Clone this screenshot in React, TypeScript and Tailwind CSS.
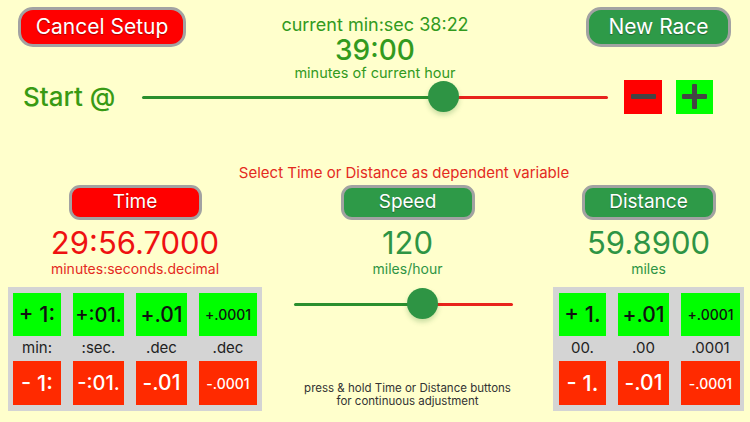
import React from "react";

function PillButton({
  label,
  color,
  width,
  height,
  size,
  radius,
}: {
  label: string;
  color: "red" | "green";
  width: string;
  height: string;
  size: string;
  radius: string;
}) {
  const bg = color === "red" ? "bg-[#FF0000]" : "bg-[#2E9A48]";
  return (
    <div
      className={`${width} ${height} ${radius} ${bg} border-[3px] border-[#A2A2A2] flex items-center justify-center text-white ${size} [text-shadow:0_1px_1px_rgba(0,0,0,0.35)]`}
    >
      {label}
    </div>
  );
}

function Slider({ width, thumb }: { width: number; thumb: number }) {
  return (
    <div className="relative h-[34px]" style={{ width }}>
      <div
        className="absolute top-[16px] left-0 h-[3px] bg-[#2A8F2E] rounded-full"
        style={{ width: thumb }}
      />
      <div
        className="absolute top-[16px] right-0 h-[3px] bg-[#E8231B] rounded-full"
        style={{ width: width - thumb }}
      />
      <div
        className="absolute top-[1px] w-[31px] h-[31px] rounded-full bg-[#2E9444] shadow-[0_3px_5px_rgba(40,120,40,0.25)]"
        style={{ left: thumb - 15.5 }}
      />
    </div>
  );
}

type Cell = { w: string; plus: string; minus: string; label: string; size: string };

function Keypad({ cells, width, pl }: { cells: Cell[]; width: string; pl: string }) {
  return (
    <div className={`${width} h-[124px] bg-[#D4D4D4] ${pl} pt-[6px] flex gap-[12px]`}>
      {cells.map((c, i) => (
        <div key={i} className={`${c.w} flex flex-col`}>
          <div
            className={`h-[43px] bg-[#00FF00] flex items-center justify-center text-[#111111] font-medium ${c.size}`}
          >
            {c.plus}
          </div>
          <div className="h-[25px] flex items-center justify-center text-[15px] text-[#222222]">
            {c.label}
          </div>
          <div
            className={`h-[44px] bg-[#FF2A00] flex items-center justify-center text-white font-medium ${c.size}`}
          >
            {c.minus}
          </div>
        </div>
      ))}
    </div>
  );
}

export default function App() {
  const leftCells: Cell[] = [
    { w: "w-[48px]", plus: "+ 1:", minus: "- 1:", label: "min:", size: "text-[22px]" },
    { w: "w-[51px]", plus: "+:01.", minus: "-:01.", label: ":sec.", size: "text-[20px]" },
    { w: "w-[51px]", plus: "+.01", minus: "-.01", label: ".dec", size: "text-[21px]" },
    { w: "w-[58px]", plus: "+.0001", minus: "-.0001", label: ".dec", size: "text-[14px]" },
  ];
  const rightCells: Cell[] = [
    { w: "w-[47px]", plus: "+ 1.", minus: "- 1.", label: "00.", size: "text-[22px]" },
    { w: "w-[51px]", plus: "+.01", minus: "-.01", label: ".00", size: "text-[21px]" },
    { w: "w-[59px]", plus: "+.0001", minus: "-.0001", label: ".0001", size: "text-[14px]" },
  ];

  return (
    <div
      className="w-[750px] h-[422px] bg-[#FFFFCC] overflow-hidden"
      style={{ fontFamily: "Inter, 'Liberation Sans', sans-serif" }}
    >
      {/* top row */}
      <div className="grid grid-cols-[1fr_auto_1fr] items-start h-[79px]">
        <div className="pl-[18px] pt-[7px]">
          <PillButton
            label="Cancel Setup"
            color="red"
            width="w-[168px]"
            height="h-[40px]"
            size="text-[21px]"
            radius="rounded-[15px]"
          />
        </div>
        <div className="flex flex-col items-center pt-[15px] text-[#329A1E]">
          <div className="text-[18px] leading-[20px]">current min:sec 38:22</div>
          <div className="text-[28px] leading-[30px] font-medium">39:00</div>
          <div className="text-[14.5px] leading-[15px]">minutes of current hour</div>
        </div>
        <div className="flex justify-end pr-[19px] pt-[7px]">
          <PillButton
            label="New Race"
            color="green"
            width="w-[145px]"
            height="h-[40px]"
            size="text-[21px]"
            radius="rounded-[15px]"
          />
        </div>
      </div>

      {/* start row */}
      <div className="flex items-center h-[35px]">
        <div className="pl-[23px] w-[142px] text-[26px] font-medium text-[#389A14]">Start @</div>
        <Slider width={466} thumb={301} />
        <div className="ml-[16px] w-[38px] h-[34px] bg-[#FF0000] flex items-center justify-center">
          <div className="w-[25px] h-[5px] bg-[#444444] rounded-[1px]" />
        </div>
        <div className="ml-[14px] w-[37px] h-[34px] bg-[#00FF00] flex items-center justify-center relative">
          <div className="w-[25px] h-[5px] bg-[#444444] rounded-[1px]" />
          <div className="absolute w-[5px] h-[25px] bg-[#444444] rounded-[1px]" />
        </div>
      </div>

      {/* select text */}
      <div className="mt-[49px] h-[20px] leading-[20px] text-center text-[15px] text-[#E42A1E] pl-[58px]">
        Select Time or Distance as dependent variable
      </div>

      {/* columns row */}
      <div className="mt-[2px] flex pl-[8px] h-[102px]">
        <div className="w-[254px] flex flex-col items-center">
          <PillButton
            label="Time"
            color="red"
            width="w-[133px]"
            height="h-[35px]"
            size="text-[19px]"
            radius="rounded-[11px]"
          />
          <div className="mt-[6px] text-[31px] leading-[34px] text-[#EE1111]">29:56.7000</div>
          <div className="text-[14px] leading-[18px] text-[#E42A1E]">minutes:seconds.decimal</div>
        </div>
        <div className="w-[291px] flex flex-col items-center">
          <PillButton
            label="Speed"
            color="green"
            width="w-[134px]"
            height="h-[35px]"
            size="text-[19px]"
            radius="rounded-[11px]"
          />
          <div className="mt-[6px] text-[31px] leading-[34px] text-[#2E9444]">120</div>
          <div className="text-[14px] leading-[18px] text-[#2E9444]">miles/hour</div>
        </div>
        <div className="w-[191px] flex flex-col items-center">
          <PillButton
            label="Distance"
            color="green"
            width="w-[134px]"
            height="h-[35px]"
            size="text-[19px]"
            radius="rounded-[11px]"
          />
          <div className="mt-[6px] text-[31px] leading-[34px] text-[#2E9444]">59.8900</div>
          <div className="text-[14px] leading-[18px] text-[#2E9444]">miles</div>
        </div>
      </div>

      {/* panels row */}
      <div className="flex pl-[8px]">
        <Keypad cells={leftCells} width="w-[254px]" pl="pl-[5px]" />
        <div className="w-[291px] flex flex-col items-center">
          <div className="pr-[8px]">
            <Slider width={219} thumb={128} />
          </div>
          <div className="mt-[61px] text-center text-[11.5px] leading-[13px] text-[#333333]">
            press &amp; hold Time or Distance buttons
            <br />
            for continuous adjustment
          </div>
        </div>
        <Keypad cells={rightCells} width="w-[191px]" pl="pl-[6px]" />
      </div>
    </div>
  );
}
